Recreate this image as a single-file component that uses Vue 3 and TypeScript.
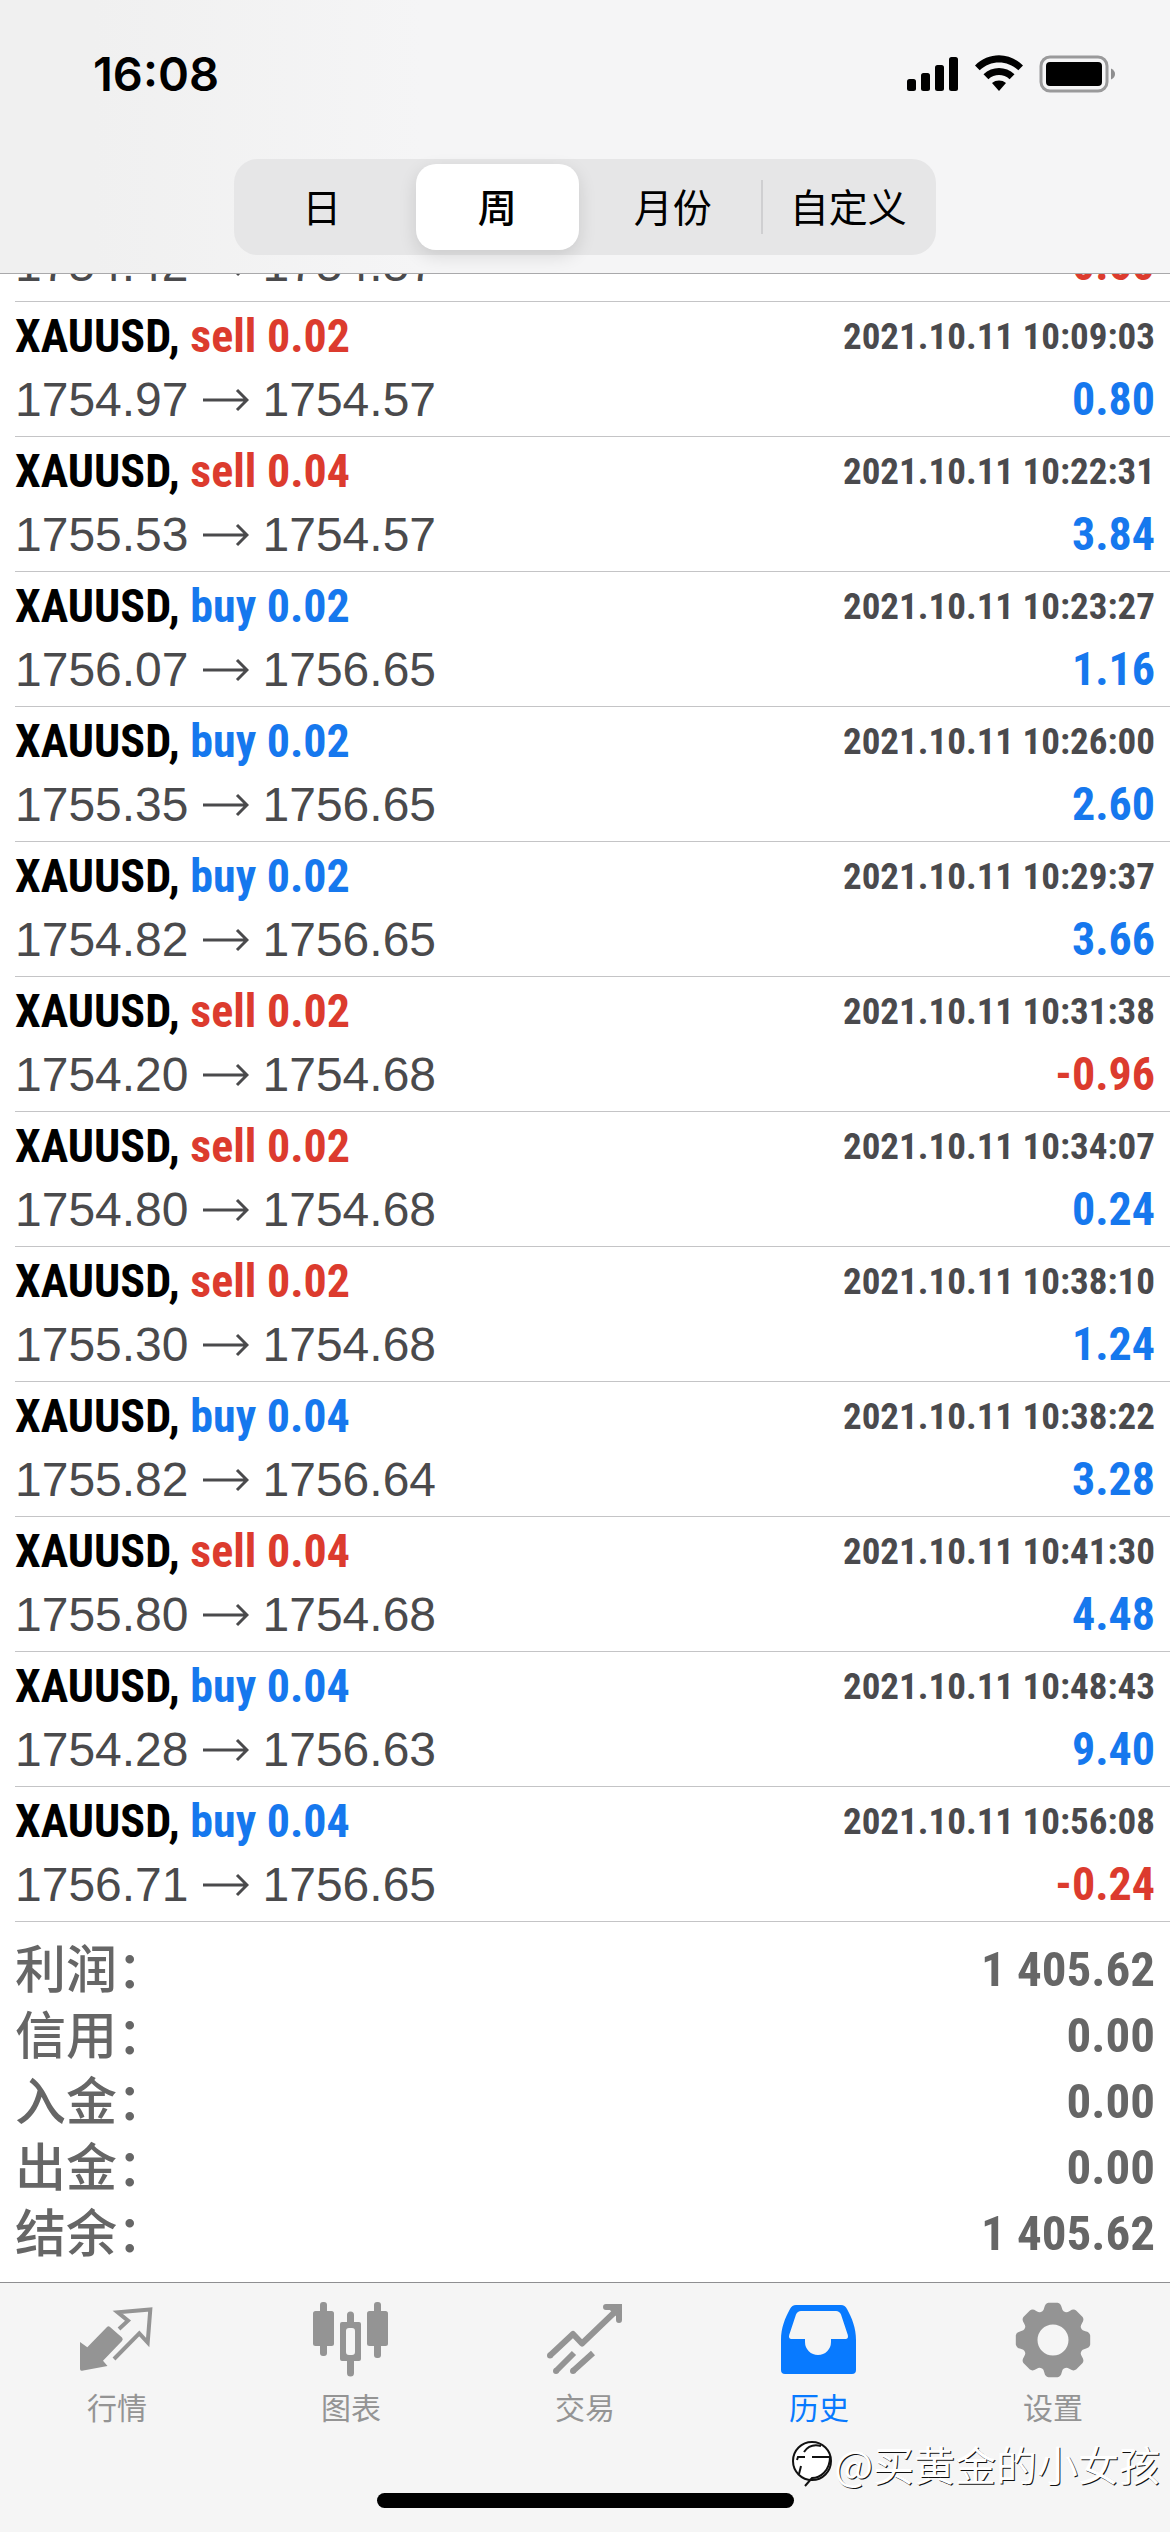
<script setup lang="ts">
import { ref } from 'vue'

type Side = 'buy' | 'sell'
interface Deal { side: Side; volume: string; open: string; close: string; time: string; profit: string }

const periods = ['日', '周', '月份', '自定义']
const period = ref('周')

// The deal scrolled halfway under the header: only its price line is still in view
const leaving = { open: '1754.42', close: '1754.57', profit: '-0.60' }

const deals: Deal[] = [
  { side: 'sell', volume: '0.02', open: '1754.97', close: '1754.57', time: '2021.10.11 10:09:03', profit: '0.80' },
  { side: 'sell', volume: '0.04', open: '1755.53', close: '1754.57', time: '2021.10.11 10:22:31', profit: '3.84' },
  { side: 'buy', volume: '0.02', open: '1756.07', close: '1756.65', time: '2021.10.11 10:23:27', profit: '1.16' },
  { side: 'buy', volume: '0.02', open: '1755.35', close: '1756.65', time: '2021.10.11 10:26:00', profit: '2.60' },
  { side: 'buy', volume: '0.02', open: '1754.82', close: '1756.65', time: '2021.10.11 10:29:37', profit: '3.66' },
  { side: 'sell', volume: '0.02', open: '1754.20', close: '1754.68', time: '2021.10.11 10:31:38', profit: '-0.96' },
  { side: 'sell', volume: '0.02', open: '1754.80', close: '1754.68', time: '2021.10.11 10:34:07', profit: '0.24' },
  { side: 'sell', volume: '0.02', open: '1755.30', close: '1754.68', time: '2021.10.11 10:38:10', profit: '1.24' },
  { side: 'buy', volume: '0.04', open: '1755.82', close: '1756.64', time: '2021.10.11 10:38:22', profit: '3.28' },
  { side: 'sell', volume: '0.04', open: '1755.80', close: '1754.68', time: '2021.10.11 10:41:30', profit: '4.48' },
  { side: 'buy', volume: '0.04', open: '1754.28', close: '1756.63', time: '2021.10.11 10:48:43', profit: '9.40' },
  { side: 'buy', volume: '0.04', open: '1756.71', close: '1756.65', time: '2021.10.11 10:56:08', profit: '-0.24' },
]

const totals = [
  { label: '利润', value: '1 405.62' },
  { label: '信用', value: '0.00' },
  { label: '入金', value: '0.00' },
  { label: '出金', value: '0.00' },
  { label: '结余', value: '1 405.62' },
]

const tabs = [
  { id: 'quotes', label: '行情' },
  { id: 'chart', label: '图表' },
  { id: 'trade', label: '交易' },
  { id: 'history', label: '历史' },
  { id: 'settings', label: '设置' },
]
const activeTab = ref('history')

// Eight-tooth cog around (38, 40)
function cogPath(): string {
  const point = (radius: number, degrees: number) => {
    const a = (degrees * Math.PI) / 180
    return `${(38 + radius * Math.cos(a)).toFixed(1)} ${(40 + radius * Math.sin(a)).toFixed(1)}`
  }
  let d = ''
  for (let i = 0; i < 8; i++) {
    const a = i * 45
    d += `${i === 0 ? 'M' : 'L'}${point(30.5, a - 21)}Q${point(30.5, a - 18)} ${point(33.5, a - 15)}Q${point(37.5, a - 12)} ${point(37.5, a - 7)}`
    d += `L${point(37.5, a + 7)}Q${point(37.5, a + 12)} ${point(33.5, a + 15)}Q${point(30.5, a + 18)} ${point(30.5, a + 21)}`
  }
  return d + 'ZM53.5 40a15.5 15.5 0 1 0-31 0a15.5 15.5 0 1 0 31 0Z'
}
const cog = cogPath()
</script>

<template>
  <div class="screen">
    <header class="top">
      <div class="status">
        <time class="clock">16:08</time>
        <svg class="status-icons" viewBox="0 0 210 40" aria-hidden="true">
          <rect x="1" y="25" width="9" height="12" rx="2.5" />
          <rect x="15" y="19" width="9" height="18" rx="2.5" />
          <rect x="29" y="11" width="9" height="26" rx="2.5" />
          <rect x="43" y="3" width="9" height="34" rx="2.5" />
          <path d="M69 11.500C82.500-2.200 103.500-2.200 117 11.500L112.300 16.300C101.500 5.800 84.500 5.800 73.700 16.300Z" />
          <path d="M77.500 20.300C86.300 11.900 99.700 11.900 108.500 20.300L103.600 25.200C97.500 19.700 88.500 19.700 82.400 25.200Z" />
          <path d="M86 29C90 25.700 96 25.700 100 29L93 37Z" />
          <rect x="135" y="3" width="66" height="34" rx="9" fill="none" stroke="#9a9a9b" stroke-width="3" />
          <rect x="140" y="8" width="56" height="24" rx="4" />
          <path d="M205 14.500Q209 16.500 209 20T205 25.500Z" fill="#8e8e8f" />
        </svg>
      </div>
      <div class="segments" role="group">
        <button
          v-for="p in periods"
          :key="p"
          type="button"
          class="segment"
          :class="{ selected: p === period }"
          :aria-pressed="p === period"
          @click="period = p"
        >{{ p }}</button>
      </div>
    </header>

    <main class="history">
      <ul class="deals">
        <li class="deal leaving">
          <div class="line">
            <span class="prices">
              {{ leaving.open }}
              <svg class="arrow" viewBox="0 0 46 24" role="img" aria-label="→"><path d="M0 12H44M34 2L44 12L34 22" /></svg>
              {{ leaving.close }}
            </span>
            <span class="profit loss">{{ leaving.profit }}</span>
          </div>
        </li>
        <li v-for="d in deals" :key="d.time" class="deal">
          <div class="line">
            <span class="title">XAUUSD, <span :class="d.side">{{ d.side }} {{ d.volume }}</span></span>
            <time class="stamp">{{ d.time }}</time>
          </div>
          <div class="line">
            <span class="prices">
              {{ d.open }}
              <svg class="arrow" viewBox="0 0 46 24" role="img" aria-label="→"><path d="M0 12H44M34 2L44 12L34 22" /></svg>
              {{ d.close }}
            </span>
            <span class="profit" :class="{ loss: d.profit.startsWith('-') }">{{ d.profit }}</span>
          </div>
        </li>
      </ul>
      <dl class="totals">
        <div v-for="t in totals" :key="t.label" class="total">
          <dt>{{ t.label }}：</dt>
          <dd>{{ t.value }}</dd>
        </div>
      </dl>
    </main>

    <footer class="bottom">
      <nav class="tabs">
        <button
          v-for="t in tabs"
          :key="t.id"
          type="button"
          class="tab"
          :class="{ active: t.id === activeTab }"
          @click="activeTab = t.id"
        >
          <svg class="icon" viewBox="0 0 76 78" fill="currentColor" aria-hidden="true">
            <g v-if="t.id === 'quotes'">
              <path d="M1 42L8.300 47.300L28 27Q29.500 25.500 31 27L43 37.500Q44.500 39.300 43 41L24 60.700L28.500 66L3 70.700Q1 71 1 69Z" />
              <path d="M40 29L49 20.700L38.700 12.300L71.300 9.500L68.700 42.500L60.300 33.300L35 59" fill="none" stroke="currentColor" stroke-width="4" />
            </g>
            <g v-else-if="t.id === 'chart'">
              <rect x="0" y="11" width="21" height="35" rx="2.500" />
              <rect x="7" y="2" width="7" height="54" rx="3" />
              <path fill-rule="evenodd" d="M29 22H34V15A3 3 0 0 1 41 15V22H46Q48 22 48 24V59Q48 61 46 61H41V73A3 3 0 0 1 34 73V61H29Q27 61 27 59V24Q27 22 29 22ZM36 28Q33 28 33 31V52Q33 55 36 55H39Q42 55 42 52V31Q42 28 39 28Z" />
              <rect x="54" y="11" width="21" height="35" rx="2.500" />
              <rect x="61" y="2" width="7" height="56" rx="3" />
            </g>
            <g v-else-if="t.id === 'trade'" fill="none" stroke="currentColor" stroke-width="6">
              <path d="M3 55.500L26 34L35 43.500L72 8" stroke-linejoin="round" />
              <path d="M59 7H72V20" stroke-linecap="round" />
              <path d="M64 7L72 15" />
              <path d="M9 71L27 53M26 71L46 53" />
              <g fill="currentColor" stroke="none">
                <circle cx="3" cy="55.500" r="3" />
                <circle cx="9" cy="71" r="3" />
                <circle cx="26" cy="71" r="3" />
              </g>
            </g>
            <path
              v-else-if="t.id === 'history'"
              fill-rule="evenodd"
              d="M15 5H60Q64 5 66 9C71 18 75 28 75 40V70Q75 74 71 74H4Q0 74 0 70V40C0 28 4 18 9 9Q11 5 15 5ZM20 11Q16.500 11 15 14.500L8.200 35Q7.300 39 10.500 39H24V42A13 13 0 0 0 50 42V39H64.500Q67.700 39 66.800 35L60 14.500Q58.500 11 55 11Z"
            />
            <path v-else fill-rule="evenodd" :d="cog" />
          </svg>
          <span>{{ t.label }}</span>
        </button>
      </nav>
      <div class="home-bar"></div>
      <div class="watermark">
        <svg class="mark" viewBox="0 0 40 48" aria-hidden="true">
          <circle cx="20" cy="22" r="19" fill="#fff" />
          <path d="M12 13Q18 4 29 7M5 21L6 18H13M20 18H38C38 32 28 39 20 39L13 47M9 27L7 35" />
        </svg>
        <span>@买黄金的小女孩</span>
      </div>
    </footer>
  </div>
</template>

<style>
body {
  margin: 0;
  background: #fff;
}
</style>

<style scoped>
.screen {
  height: 100vh;
  display: flex;
  flex-direction: column;
  overflow: hidden;
  background: #fff;
  font-family: "Liberation Sans", "Noto Sans CJK SC", sans-serif;
}
.top {
  flex: none;
  padding-bottom: 18px;
  border-bottom: 1px solid #a9a9ab;
  background: linear-gradient(90deg, #f0f0f0 8%, #f5f5f6 36%, #f5f5f6);
}
.status {
  display: flex;
  justify-content: space-between;
  align-items: center;
  height: 148px;
  margin-bottom: 11px;
  padding: 0 54px 0 93px;
}
.clock {
  font: 600 47px/56px Inter, sans-serif;
}
.status-icons {
  width: 210px;
  height: 40px;
}
.segments {
  display: flex;
  width: 60%;
  height: 96px;
  margin: 0 auto;
  border-radius: 24px;
  background: #e6e6e7;
}
.segment {
  flex: 1;
  position: relative;
  margin: 5px 6px;
  padding: 0 0 4px;
  border: 0;
  border-radius: 20px;
  background: none;
  color: #000;
  font: 400 39px/56px "Noto Sans CJK SC", sans-serif;
}
.segment.selected {
  background: #fff;
  font-weight: 500;
  box-shadow: 0 6px 18px rgba(0, 0, 0, 0.12);
}
.segment:last-child::before {
  content: "";
  position: absolute;
  left: -6px;
  top: 16px;
  bottom: 16px;
  width: 2px;
  background: #cfcfd1;
}
.history {
  flex: 1;
  min-height: 0;
  display: flex;
  flex-direction: column;
  justify-content: flex-end;
  overflow: hidden;
}
.deals,
.totals {
  flex: none;
  margin: 0;
  padding: 0;
  list-style: none;
}
.deal {
  height: 131px;
  margin-left: 15px;
  padding: 3px 15px 0 0;
  border-bottom: 1px solid #c4c4c6;
}
.deal.leaving {
  height: 68px;
}
.line {
  display: flex;
  justify-content: space-between;
  align-items: center;
  height: 63px;
  line-height: 63px;
  white-space: nowrap;
}
.title,
.stamp,
.profit,
.total dd {
  font-family: "Roboto Condensed", "Liberation Sans", sans-serif;
  font-weight: 700;
}
.title,
.profit {
  font-size: 46px;
}
.stamp {
  color: #4a4a4d;
  font-size: 37px;
}
.prices {
  display: flex;
  align-items: center;
  gap: 14px;
  color: #4a4a4c;
  font-size: 48px;
}
.arrow {
  width: 46px;
  height: 24px;
  fill: none;
  stroke: currentColor;
  stroke-width: 3;
}
.profit {
  color: #1678ee;
}
.buy {
  color: #1678ee;
}
.sell,
.loss {
  color: #dc3b2e;
}
.totals {
  padding: 14px 15px 16px;
}
.total {
  display: flex;
  justify-content: space-between;
  align-items: flex-start;
  height: 66px;
  color: #666;
}
.total dt {
  font: 500 51px/60px "Noto Sans CJK SC", sans-serif;
}
.total dd {
  margin: 0;
  font-size: 49px;
  line-height: 67px;
}
.bottom {
  flex: none;
  position: relative;
  height: 249px;
  border-top: 1px solid #8f8f91;
  background: #f5f5f5;
}
.tabs {
  display: flex;
  height: 210px;
}
.tab {
  flex: 1;
  display: flex;
  flex-direction: column;
  align-items: center;
  gap: 8px;
  padding: 17px 0 0;
  border: 0;
  background: none;
  color: #949494;
  font: 400 30px/40px "Noto Sans CJK SC", sans-serif;
}
.tab.active {
  color: #087aff;
}
.icon {
  width: 76px;
  height: 78px;
}
.home-bar {
  width: 417px;
  height: 15px;
  margin: 0 auto;
  border-radius: 8px;
  background: #000;
}
.watermark {
  position: absolute;
  right: 10px;
  bottom: 41px;
  display: flex;
  align-items: center;
  gap: 2px;
  color: #fff;
  font: 400 41px/56px "Noto Sans CJK SC", sans-serif;
  text-shadow: 1px 1px 0 #111;
}
.mark {
  width: 40px;
  height: 48px;
  fill: none;
  stroke: #111;
  stroke-width: 2;
}
</style>
